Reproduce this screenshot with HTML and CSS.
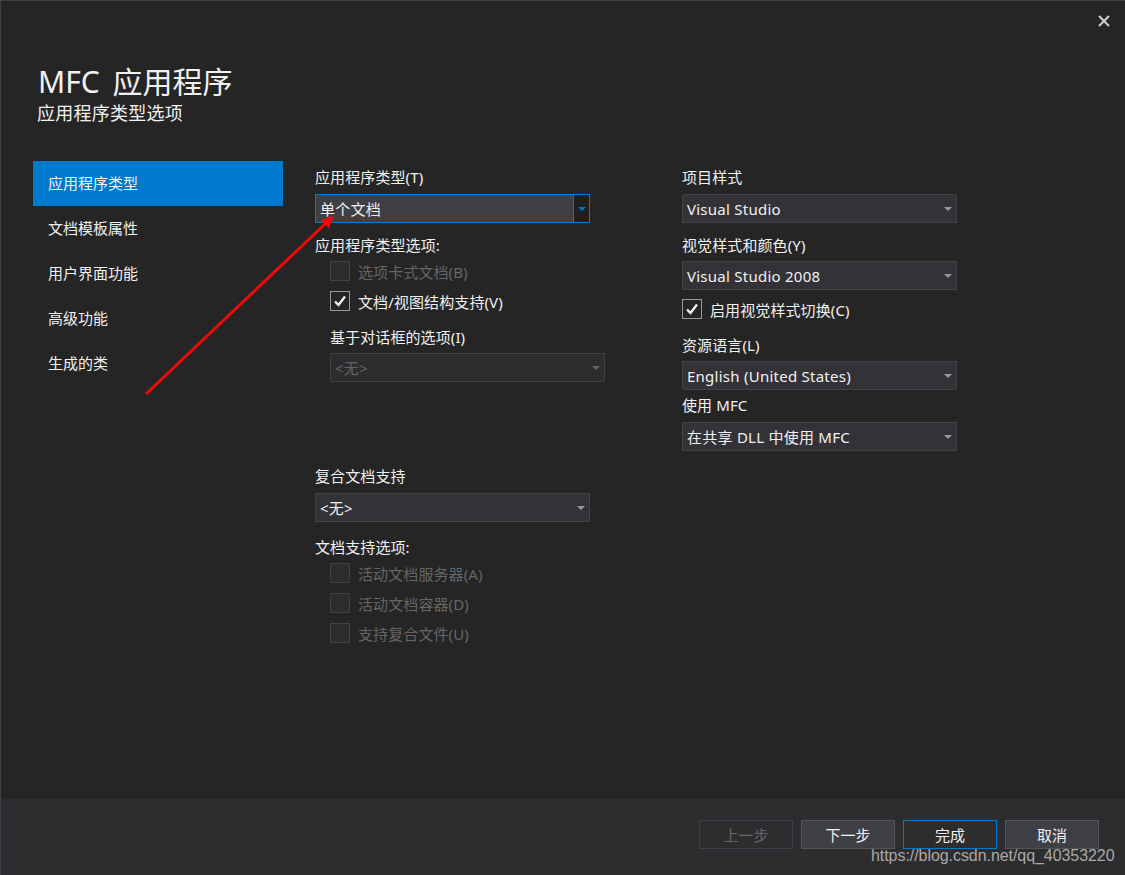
FILE: index.html
```html
<!DOCTYPE html>
<html lang="zh-CN">

<head>
    <meta charset="UTF-8">
    <meta name="viewport" content="width=device-width, initial-scale=1.0">
    <link rel="stylesheet" href="styles.css">

    <title>MFC 应用程序</title>
</head>

<body>

    <div class="dialog">
        <div class="close-row">
            <svg class="close-icon" width="12" height="12" viewBox="0 0 12 12">
                <path d="M1 1 L11 11 M11 1 L1 11" stroke="#d0d0d0" stroke-width="2" fill="none" />
            </svg>
        </div>

        <div class="heading">
            <h1 class="title">MFC 应用程序</h1>
            <h2 class="subtitle">应用程序类型选项</h2>
        </div>

        <div class="content">
            <ul class="nav">
                <li class="nav-item active">应用程序类型</li>
                <li class="nav-item">文档模板属性</li>
                <li class="nav-item">用户界面功能</li>
                <li class="nav-item">高级功能</li>
                <li class="nav-item">生成的类</li>
            </ul>

            <div class="col col-left">
                <div class="label">应用程序类型(T)</div>
                <div class="combo focused">
                    <span class="combo-text">单个文档</span>
                    <span class="combo-btn"><span class="caret"></span></span>
                </div>

                <div class="label gap-12">应用程序类型选项:</div>
                <div class="check-list">
                    <div class="check disabled"><span class="box"></span>选项卡式文档(B)</div>
                    <div class="check">
                        <span class="box">
                            <svg width="14" height="12" viewBox="0 0 14 12">
                                <path d="M2 6.5 L5.5 10 L12 1.5" stroke="#f1f1f1" stroke-width="2.4" fill="none" />
                            </svg>
                        </span>
                        文档/视图结构支持(V)
                    </div>
                </div>

                <div class="indent">
                    <div class="label gap-16">基于对话框的选项(I)</div>
                    <div class="combo disabled">
                        <span class="combo-text">&lt;无&gt;</span>
                        <span class="combo-btn"><span class="caret"></span></span>
                    </div>
                </div>

                <div class="label gap-85">复合文档支持</div>
                <div class="combo">
                    <span class="combo-text">&lt;无&gt;</span>
                    <span class="combo-btn"><span class="caret"></span></span>
                </div>

                <div class="label gap-15">文档支持选项:</div>
                <div class="check-list">
                    <div class="check disabled"><span class="box"></span>活动文档服务器(A)</div>
                    <div class="check disabled"><span class="box"></span>活动文档容器(D)</div>
                    <div class="check disabled"><span class="box"></span>支持复合文件(U)</div>
                </div>
            </div>

            <div class="col col-right">
                <div class="label">项目样式</div>
                <div class="combo">
                    <span class="combo-text">Visual Studio</span>
                    <span class="combo-btn"><span class="caret"></span></span>
                </div>

                <div class="label gap-12">视觉样式和颜色(Y)</div>
                <div class="combo">
                    <span class="combo-text">Visual Studio 2008</span>
                    <span class="combo-btn"><span class="caret"></span></span>
                </div>
                <div class="check flush">
                    <span class="box">
                        <svg width="14" height="12" viewBox="0 0 14 12">
                            <path d="M2 6.5 L5.5 10 L12 1.5" stroke="#f1f1f1" stroke-width="2.4" fill="none" />
                        </svg>
                    </span>
                    启用视觉样式切换(C)
                </div>

                <div class="label gap-16">资源语言(L)</div>
                <div class="combo">
                    <span class="combo-text">English (United States)</span>
                    <span class="combo-btn"><span class="caret"></span></span>
                </div>

                <div class="label gap-5">使用 MFC</div>
                <div class="combo">
                    <span class="combo-text">在共享 DLL 中使用 MFC</span>
                    <span class="combo-btn"><span class="caret"></span></span>
                </div>
            </div>
        </div>

        <div class="footer">
            <button type="button" class="btn" disabled>上一步</button>
            <button type="button" class="btn">下一步</button>
            <button type="button" class="btn primary">完成</button>
            <button type="button" class="btn">取消</button>
        </div>
    </div>

    <!-- annotation drawn on top of the screenshot -->
    <svg class="arrow" width="1125" height="875" viewBox="0 0 1125 875">
        <path d="M146 394 L325 224" stroke="#ee0a0a" stroke-width="3" fill="none" />
        <path d="M333.5 216 L329 228.5 L320.5 220 Z" fill="#ee0a0a" />
    </svg>

    <div class="watermark">https://blog.csdn.net/qq_40353220</div>

</body>

</html>
```

FILE: styles.css
```css
* {
    box-sizing: border-box;
}

body {
    margin: 0;
    background-color: #252526;
    color: #f1f1f1;
    font-family: "Noto Sans", "Noto Sans CJK SC", sans-serif;
    font-size: 15px;
}

.dialog {
    display: flex;
    flex-direction: column;
    width: 1125px;
    height: 875px;
    border-top: 1px solid #3f3f46;
    border-left: 1px solid #3f3f46;
    overflow: hidden;
}

.close-row {
    display: flex;
    justify-content: flex-end;
    height: 60px;
    padding: 14px 15px 0 0;
}

.close-icon {
    display: block;
}

.heading {
    height: 100px;
    padding-left: 37px;
}

.title {
    margin: 0;
    height: 42px;
    font-size: 30px;
    font-weight: 400;
    line-height: 42px;
    word-spacing: 5px;
}

.subtitle {
    margin: -2px 0 0 -1px;
    font-size: 18px;
    font-weight: 400;
    line-height: 24px;
    letter-spacing: 0.25px;
}

.content {
    display: flex;
    flex: 1;
    padding-left: 32px;
}

.nav {
    width: 250px;
    margin: 0;
    padding: 0;
    list-style: none;
}

.nav-item {
    height: 45px;
    padding-left: 15px;
    line-height: 45px;
}

.nav-item.active {
    background-color: #007acc;
}

.col {
    width: 275px;
    padding-top: 6px;
}

.col-left {
    margin-left: 32px;
}

.col-right {
    margin-left: 92px;
}

.label {
    height: 20px;
    margin-bottom: 7px;
    line-height: 20px;
    letter-spacing: 0.1px;
}

.gap-5 {
    margin-top: 5px;
}

.gap-12 {
    margin-top: 12px;
    margin-bottom: 6px;
}

.gap-15 {
    margin-top: 15px;
    margin-bottom: 6px;
}

.gap-16 {
    margin-top: 16px;
    margin-bottom: 6px;
}

.gap-85 {
    margin-top: 84px;
    margin-bottom: 7px;
}

.indent {
    width: 275px;
    margin-left: 15px;
}

.combo {
    display: flex;
    align-items: stretch;
    height: 29px;
    background-color: #333337;
    border: 1px solid #434346;
    line-height: 29px;
}

.combo-text {
    flex: 1;
    padding-left: 4px;
    letter-spacing: 0.25px;
    white-space: nowrap;
}

.combo-btn {
    display: flex;
    align-items: center;
    justify-content: center;
    width: 16px;
}

.caret {
    width: 0;
    height: 0;
    border-left: 4px solid transparent;
    border-right: 4px solid transparent;
    border-top: 4px solid #999999;
}

.combo.focused {
    background-color: #3f3f46;
    border-color: #007acc;
}

.combo.focused .combo-btn {
    background-color: #1f1f20;
    border-left: 1px solid #007acc;
}

.combo.focused .caret {
    border-top-color: #007acc;
}

.combo.disabled {
    background-color: #2d2d30;
    border-color: #3f3f46;
    color: #656565;
}

.combo.disabled .caret {
    border-top-color: #656565;
}

.check-list {
    display: flex;
    flex-direction: column;
    gap: 10px;
    padding-left: 15px;
}

.check {
    display: flex;
    align-items: flex-start;
    gap: 8px;
    height: 20px;
    line-height: 22px;
    letter-spacing: 0.1px;
}

.check.flush {
    margin-top: 9px;
}

.box {
    display: flex;
    align-items: center;
    justify-content: center;
    width: 20px;
    height: 20px;
    background-color: #252526;
    border: 1px solid #999999;
}

.check.disabled {
    color: #656565;
}

.check.disabled .box {
    background-color: #2d2d30;
    border-color: #3f3f46;
}

.footer {
    display: flex;
    justify-content: flex-end;
    gap: 8px;
    height: 76px;
    padding: 21px 26px 0 0;
    background-color: #2d2d30;
}

.btn {
    width: 94px;
    height: 29px;
    padding: 0;
    background-color: #3f3f46;
    border: 1px solid #555555;
    color: #f1f1f1;
    font-family: inherit;
    font-size: 15px;
}

.btn.primary {
    background-color: #2d2d30;
    border-color: #007acc;
}

.btn:disabled {
    background-color: #2d2d30;
    border-color: #3f3f46;
    color: #656565;
}

.arrow {
    position: absolute;
    top: 0;
    left: 0;
    pointer-events: none;
}

.watermark {
    position: absolute;
    left: 871px;
    top: 846px;
    color: #a8a8a8;
    font-family: "Liberation Sans", sans-serif;
    font-size: 16px;
    line-height: 20px;
    letter-spacing: -0.06px;
}
```
